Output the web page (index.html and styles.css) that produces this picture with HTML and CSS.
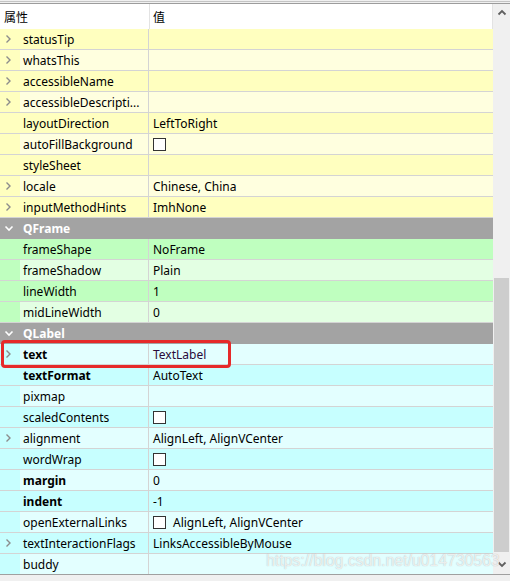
FILE: index.html
```html
<!DOCTYPE html>
<html>
<head>
<meta charset="utf-8">
<link rel="stylesheet" href="styles.css">
</head>
<body>
<div class="view">
  <div class="inner">
    <div class="table">
      <div class="head"><span class="hname">属性</span><span class="hval">值</span></div>

      <div class="row y d"><span class="br"><svg class="chev" viewBox="0 0 7 10"><polyline points="1.5,1.5 5,5 1.5,8.5"/></svg></span><span class="nm">statusTip</span><span class="val"></span></div>
      <div class="row y l"><span class="br"><svg class="chev" viewBox="0 0 7 10"><polyline points="1.5,1.5 5,5 1.5,8.5"/></svg></span><span class="nm">whatsThis</span><span class="val"></span></div>
      <div class="row y d"><span class="br"><svg class="chev" viewBox="0 0 7 10"><polyline points="1.5,1.5 5,5 1.5,8.5"/></svg></span><span class="nm">accessibleName</span><span class="val"></span></div>
      <div class="row y l"><span class="br"><svg class="chev" viewBox="0 0 7 10"><polyline points="1.5,1.5 5,5 1.5,8.5"/></svg></span><span class="nm">accessibleDescripti...</span><span class="val"></span></div>
      <div class="row y d"><span class="br"></span><span class="nm">layoutDirection</span><span class="val">LeftToRight</span></div>
      <div class="row y l"><span class="br"></span><span class="nm">autoFillBackground</span><span class="val"><span class="cb"></span></span></div>
      <div class="row y d"><span class="br"></span><span class="nm">styleSheet</span><span class="val"></span></div>
      <div class="row y l"><span class="br"><svg class="chev" viewBox="0 0 7 10"><polyline points="1.5,1.5 5,5 1.5,8.5"/></svg></span><span class="nm">locale</span><span class="val">Chinese, China</span></div>
      <div class="row y d"><span class="br"><svg class="chev" viewBox="0 0 7 10"><polyline points="1.5,1.5 5,5 1.5,8.5"/></svg></span><span class="nm">inputMethodHints</span><span class="val">ImhNone</span></div>

      <div class="row sec"><span class="br"><svg class="down" viewBox="0 0 10 7"><polyline points="1.5,1.5 5,5 8.5,1.5"/></svg></span><span class="stitle">QFrame</span></div>
      <div class="row g d"><span class="br"></span><span class="nm">frameShape</span><span class="val">NoFrame</span></div>
      <div class="row g l"><span class="br"></span><span class="nm">frameShadow</span><span class="val">Plain</span></div>
      <div class="row g d"><span class="br"></span><span class="nm">lineWidth</span><span class="val">1</span></div>
      <div class="row g l"><span class="br"></span><span class="nm">midLineWidth</span><span class="val">0</span></div>

      <div class="row sec"><span class="br"><svg class="down" viewBox="0 0 10 7"><polyline points="1.5,1.5 5,5 8.5,1.5"/></svg></span><span class="stitle">QLabel</span></div>
      <div class="row c l"><span class="br"><svg class="chev" viewBox="0 0 7 10"><polyline points="1.5,1.5 5,5 1.5,8.5"/></svg></span><span class="nm b">text</span><span class="val tl">TextLabel</span></div>
      <div class="row c d"><span class="br"></span><span class="nm b">textFormat</span><span class="val">AutoText</span></div>
      <div class="row c l"><span class="br"></span><span class="nm">pixmap</span><span class="val"></span></div>
      <div class="row c d"><span class="br"></span><span class="nm">scaledContents</span><span class="val"><span class="cb"></span></span></div>
      <div class="row c l"><span class="br"><svg class="chev" viewBox="0 0 7 10"><polyline points="1.5,1.5 5,5 1.5,8.5"/></svg></span><span class="nm">alignment</span><span class="val">AlignLeft, AlignVCenter</span></div>
      <div class="row c d"><span class="br"></span><span class="nm">wordWrap</span><span class="val"><span class="cb"></span></span></div>
      <div class="row c l"><span class="br"></span><span class="nm b">margin</span><span class="val">0</span></div>
      <div class="row c d"><span class="br"></span><span class="nm b">indent</span><span class="val">-1</span></div>
      <div class="row c l"><span class="br"></span><span class="nm">openExternalLinks</span><span class="val"><span class="cb"></span><span class="after">AlignLeft, AlignVCenter</span></span></div>
      <div class="row c d"><span class="br"><svg class="chev" viewBox="0 0 7 10"><polyline points="1.5,1.5 5,5 1.5,8.5"/></svg></span><span class="nm">textInteractionFlags</span><span class="val">LinksAccessibleByMouse</span></div>
      <div class="row c l last"><span class="br"></span><span class="nm">buddy</span><span class="val"></span></div>
    </div>
    <div class="scroll">
      <div class="sbtn"><svg class="arrow" viewBox="0 0 10 7"><polyline points="1.5,5.5 5,2 8.5,5.5"/></svg></div>
      <div class="track"><div class="thumb" style="height:274px"></div></div>
      <div class="sbtn dn"><svg class="arrow" viewBox="0 0 10 7"><polyline points="1.5,1.5 5,5 8.5,1.5"/></svg></div>
    </div>
  </div>
  <div class="highlight"></div>
  <div class="watermark">https://blog.csdn.net/u014730563</div>
</div>
</body>
</html>
```

FILE: styles.css
```css
html, body {
  margin: 0;
  padding: 0;
  background: #f0f0f0;
}
body {
  width: 510px;
  height: 581px;
  overflow: hidden;
  font-family: "Noto Sans", "Noto Sans CJK SC", sans-serif;
  font-size: 12px;
  color: #000;
}
.view {
  position: relative;
  margin-top: 1px;
  border-top: 1px solid #c4c4c4;
  padding-top: 1px;
}
.inner {
  display: flex;
  border-top: 1px solid #9c9c9c;
  border-bottom: 1px solid #a0a0a0;
  background: #fff;
}
.table {
  width: 493px;
  display: flex;
  flex-direction: column;
}
.head {
  height: 25px;
  display: flex;
  align-items: center;
  background: #fff;
  border-right: 1px solid #e3e3e3;
  box-sizing: border-box;
  font-family: "Noto Sans CJK SC", sans-serif;
}
.hname {
  width: 145px;
  padding-left: 4px;
  height: 100%;
  display: flex;
  align-items: center;
  border-right: 1px solid #e3e3e3;
}
.hval {
  padding-left: 3px;
}
.row {
  display: flex;
  height: 20px;
  border-bottom: 1px solid #d4d4d4;
}
.row.last {
  border-bottom: 0;
}
.br {
  width: 20px;
  display: flex;
  align-items: center;
  justify-content: center;
}
.nm {
  width: 125px;
  padding-left: 3px;
  display: flex;
  align-items: center;
  border-right: 1px solid #d4d4d4;
  white-space: nowrap;
  overflow: hidden;
}
.nm.b {
  font-weight: bold;
}
.val {
  flex: 1;
  padding-left: 4px;
  display: flex;
  align-items: center;
  white-space: nowrap;
}
.val.tl {
  color: #2a0a3a;
}
.after {
  margin-left: 7px;
}
.cb {
  width: 11px;
  height: 11px;
  border: 1px solid #333;
  background: #fff;
}
.chev {
  width: 7px;
  height: 10px;
  margin-left: -3px;
  fill: none;
  stroke: #8c8c8c;
  stroke-width: 1.4;
}
.down {
  width: 10px;
  height: 7px;
  margin-left: -3px;
  fill: none;
  stroke: #fff;
  stroke-width: 1.6;
}
.y { background: #ffffbf; }
.y.l { background: #ffffdf; }
.y .br { background: #ffffbf; }
.g { background: #bfffbf; }
.g.l { background: #e3ffe3; }
.g .br { background: #bfffbf; }
.c { background: #c7ffff; }
.c.l { background: #e3ffff; }
.c .br { background: #c7ffff; }
.sec {
  background: #a3a3a3;
  border-bottom-color: #a3a3a3;
}
.stitle {
  padding-left: 3px;
  display: flex;
  align-items: center;
  color: #fff;
  font-weight: bold;
}
.scroll {
  width: 17px;
  background: #f0f0f0;
  display: flex;
  flex-direction: column;
}
.sbtn {
  height: 17px;
  display: flex;
  align-items: center;
  justify-content: center;
}
.sbtn.dn {
  height: 20px;
}
.arrow {
  width: 10px;
  height: 7px;
  fill: none;
  stroke: #606060;
  stroke-width: 1.8;
}
.track {
  flex: 1;
  display: flex;
  flex-direction: column;
  justify-content: flex-end;
  padding: 0 1px 2px;
}
.thumb {
  background: #cdcdcd;
}
.highlight {
  position: absolute;
  left: 1px;
  top: 338px;
  width: 224px;
  height: 22px;
  border: 3px solid #e62a2a;
  border-radius: 4px;
}
.watermark {
  position: absolute;
  left: 266px;
  top: 550px;
  font-family: "Liberation Sans", Arial, sans-serif;
  font-size: 15.8px;
  color: rgba(255, 255, 255, 0.75);
  text-shadow: 0 0 1px rgba(120, 120, 120, 0.55);
  white-space: nowrap;
}
```
